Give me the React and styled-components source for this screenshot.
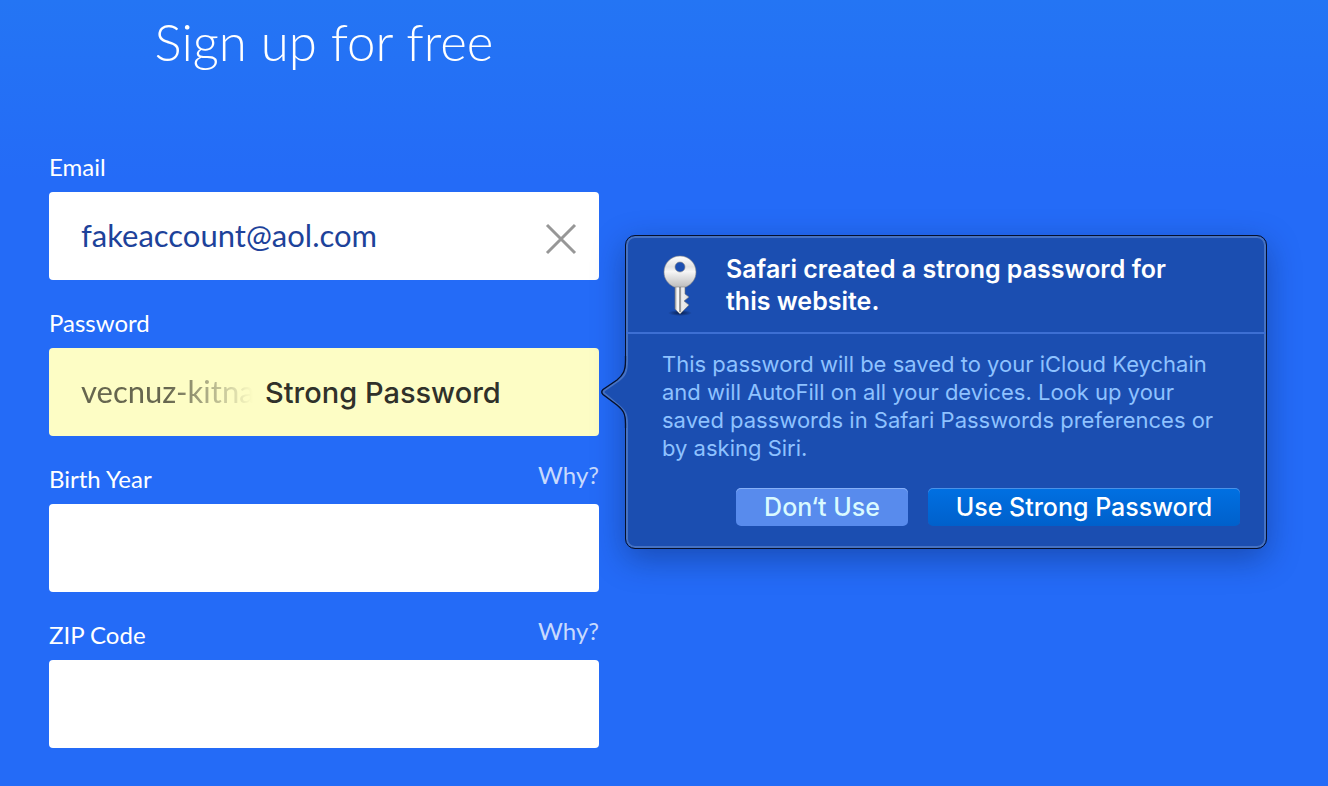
import React, { useState } from 'react';
import styled, { createGlobalStyle } from 'styled-components';

const App = () => {
  const [email, setEmail] = useState('fakeaccount@aol.com');

  return (
    <>
      <GlobalStyle />
      <Page>
        <SignUpForm onSubmit={(e) => e.preventDefault()}>
          <Title>Sign up for free</Title>
          <Field>
            <LabelRow>
              <Label htmlFor="email">Email</Label>
            </LabelRow>
            <InputBox>
              <TextInput id="email" value={email} onChange={(e) => setEmail(e.target.value)} />
              <ClearButton type="button" aria-label="Clear" onClick={() => setEmail('')}>
                <CloseIcon />
              </ClearButton>
            </InputBox>
          </Field>
          <Field>
            <LabelRow>
              <Label htmlFor="password">Password</Label>
            </LabelRow>
            <InputBox $autoFill>
              <FadedInput id="password" defaultValue="vecnuz-kitna" />
              <StrongText>Strong Password</StrongText>
              <PasswordPopover />
            </InputBox>
          </Field>
          <Field>
            <LabelRow>
              <Label htmlFor="birthYear">Birth Year</Label>
              <WhyLink href="#birthYear">Why?</WhyLink>
            </LabelRow>
            <InputBox>
              <TextInput id="birthYear" />
            </InputBox>
          </Field>
          <Field>
            <LabelRow>
              <Label htmlFor="zipCode">ZIP Code</Label>
              <WhyLink href="#zipCode">Why?</WhyLink>
            </LabelRow>
            <InputBox>
              <TextInput id="zipCode" />
            </InputBox>
          </Field>
        </SignUpForm>
      </Page>
    </>
  );
};

const PasswordPopover = () => (
  <Popover role="dialog" aria-labelledby="popoverTitle">
    <PopoverArrow />
    <PopoverHeader>
      <KeyIcon />
      <PopoverTitle id="popoverTitle">
        Safari created a strong password for<br />this website.
      </PopoverTitle>
    </PopoverHeader>
    <PopoverBody>
      <PopoverText>
        This password will be saved to your iCloud Keychain<br />
        and will AutoFill on all your devices. Look up your<br />
        saved passwords in Safari Passwords preferences or<br />
        by asking Siri.
      </PopoverText>
      <ButtonRow>
        <PopoverButton type="button">Don‘t Use</PopoverButton>
        <PopoverButton type="button" $primary>Use Strong Password</PopoverButton>
      </ButtonRow>
    </PopoverBody>
  </Popover>
);

const CloseIcon = () => (
  <svg width="32" height="32" viewBox="0 0 32 32" fill="none" stroke="#979797" strokeWidth="3">
    <path d="M2 2L30 30M30 2L2 30" />
  </svg>
);

const PopoverArrow = () => (
  <ArrowSvg width="29" height="72" viewBox="0 0 29 72">
    <path d="M29 2H26C26 16 24 19 17 25L3 33Q0 36 3 39L17 50C24 56 26 59 26 70H29Z" fill="#1b4eb1" />
    <path d="M27 0V4C27 16 25 20 18 25L5 34Q2 36 5 38L18 49C25 55 27 58 27 68V72" fill="none" stroke="#4672c3" strokeWidth="2" />
    <path d="M25.5 0V4C25.5 15 23 19 17 24L3 33.5Q.5 36 3 38.5L17 49C23 54 25.5 57 25.5 68V72" fill="none" stroke="#06102b" strokeWidth="1.3" />
  </ArrowSvg>
);

const KeyIcon = () => (
  <KeySvg width="36" height="64" viewBox="0 0 36 64">
    <defs>
      <linearGradient id="keyHead" x1="0" y1="0" x2="0" y2="1">
        <stop offset="0" stopColor="#fff" />
        <stop offset=".35" stopColor="#e2e2e2" />
        <stop offset=".5" stopColor="#f6f6f6" />
        <stop offset="1" stopColor="#bdbdbd" />
      </linearGradient>
      <linearGradient id="keyShaft" x1="0" y1="0" x2="1" y2="0">
        <stop offset="0" stopColor="#aaa" />
        <stop offset=".2" stopColor="#fff" />
        <stop offset=".42" stopColor="#ddd" />
        <stop offset=".55" stopColor="#eee" />
        <stop offset="1" stopColor="#ddd" />
      </linearGradient>
      <radialGradient id="keyShadow">
        <stop offset="0" stopColor="#071a45" stopOpacity=".9" />
        <stop offset="1" stopColor="#071a45" stopOpacity="0" />
      </radialGradient>
    </defs>
    <ellipse cx="18" cy="60" rx="12" ry="3" fill="url(#keyShadow)" />
    <path d="M13 30H23V41L27 44L22 48L27 52L23 56L18 61L13 56Z" fill="url(#keyShaft)" stroke="#777" strokeWidth=".6" />
    <path fillRule="evenodd" d="M18 3C27 3 34 10 34 19C34 26 30 31 24 34H12C6 31 2 26 2 19C2 10 9 3 18 3ZM18 9A5 5 0 1 0 18 19A5 5 0 1 0 18 9Z" fill="url(#keyHead)" stroke="#888" strokeWidth=".6" />
    <path d="M18 34V59" stroke="#666" strokeWidth="1.2" />
  </KeySvg>
);

const GlobalStyle = createGlobalStyle`
  * {
    box-sizing: border-box;
  }

  body {
    margin: 0;
    background: #246bf7;
    font-family: Lato, sans-serif;
  }
`;

const Page = styled.main`
  min-height: 100vh;
  padding: 10px 48px 18px 49px;
  background: linear-gradient(#2475f4, #246bf7 180px);
`;

const SignUpForm = styled.form`
  max-width: 550px;
`;

const Title = styled.h1`
  margin: 0 0 70px;
  font-size: 51px;
  line-height: 64px;
  font-weight: 300;
  text-align: center;
  color: #fff;
`;

const Field = styled.div`
  margin-bottom: 20px;
`;

const LabelRow = styled.div`
  display: flex;
  justify-content: space-between;
  align-items: flex-start;
  height: 48px;
`;

const Label = styled.label`
  font-size: 24px;
  line-height: 46px;
  color: #fff;
`;

const WhyLink = styled.a`
  font-size: 24px;
  line-height: 38px;
  color: #c8dafd;
  text-decoration: none;
`;

const InputBox = styled.div`
  position: relative;
  display: flex;
  align-items: center;
  height: 88px;
  padding: 0 22px 0 32px;
  border-radius: 4px;
  background: ${(props) => (props.$autoFill ? '#fdfdc5' : '#fff')};
`;

const TextInput = styled.input`
  flex: 1;
  min-width: 0;
  height: 88px;
  padding: 0 0 3px;
  border: 0;
  outline: 0;
  background: transparent;
  font-family: inherit;
  font-size: 31px;
  color: #1d429a;
`;

const FadedInput = styled(TextInput)`
  flex: 0 0 172px;
  color: #66664f;
  mask-image: linear-gradient(90deg, #000 50%, transparent);
`;

const StrongText = styled.span`
  margin-left: 12px;
  font-family: Inter, sans-serif;
  font-size: 29px;
  font-weight: 500;
  white-space: nowrap;
  color: #30312a;
`;

const ClearButton = styled.button`
  display: flex;
  padding: 6px 0 0;
  border: 0;
  background: none;
  cursor: pointer;
`;

const Popover = styled.section`
  position: absolute;
  top: -113px;
  left: calc(100% + 26px);
  width: 642px;
  border: 1px solid #06102b;
  border-radius: 10px;
  background: #1b4eb1;
  box-shadow: inset 0 0 0 2px #4672c3, 0 10px 32px rgba(10, 30, 80, 0.4);
  font-family: Inter, sans-serif;
`;

const ArrowSvg = styled.svg`
  position: absolute;
  top: 120px;
  left: -26px;
`;

const PopoverHeader = styled.header`
  display: flex;
  padding: 17px 36px 15px;
  border-bottom: 2px solid #3d6fd3;
`;

const KeySvg = styled.svg`
  flex: none;
  margin-right: 28px;
`;

const PopoverTitle = styled.h2`
  margin: 0;
  font-size: 25px;
  line-height: 32px;
  font-weight: 600;
  white-space: nowrap;
  color: #fff;
`;

const PopoverBody = styled.div`
  padding: 16px 26px 22px 36px;
`;

const PopoverText = styled.p`
  margin: 0 0 26px;
  font-size: 22px;
  line-height: 28px;
  white-space: nowrap;
  color: #8ec2ff;
`;

const ButtonRow = styled.div`
  display: flex;
  justify-content: flex-end;
  gap: 20px;
`;

const PopoverButton = styled.button`
  height: 38px;
  min-width: ${(props) => (props.$primary ? '312px' : '172px')};
  padding: 0;
  border: 0;
  border-radius: 5px;
  background: ${(props) => (props.$primary ? 'linear-gradient(#0070e2, #0060cb)' : '#588bed')};
  box-shadow: inset 0 1px 0 ${(props) => (props.$primary ? '#4a91e8' : '#86b0f8')};
  font-family: inherit;
  font-size: 25px;
  font-weight: 500;
  color: ${(props) => (props.$primary ? '#fff' : '#d9faff')};
  cursor: pointer;
`;

export default App;
